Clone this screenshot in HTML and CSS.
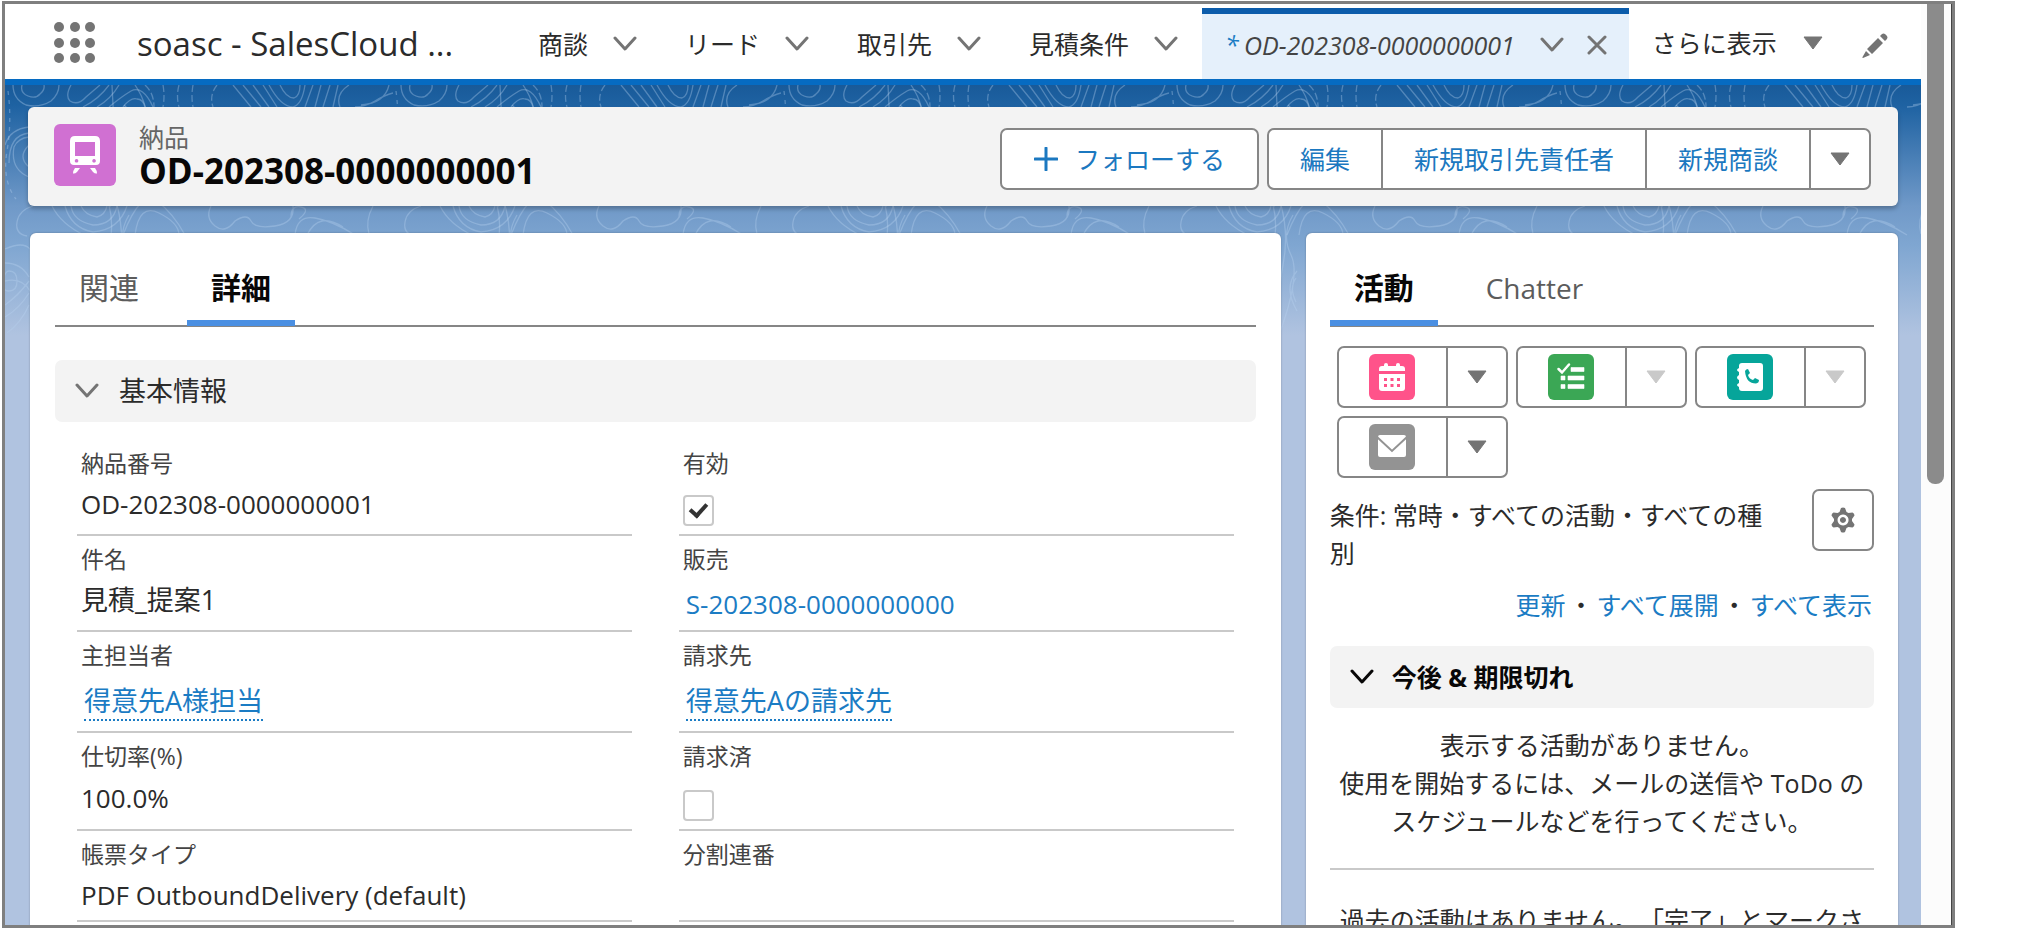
FILE: index.html
```html
<!DOCTYPE html>
<html lang="ja">
<head>
<meta charset="utf-8">
<title>OD-202308-0000000001 | soasc</title>
<link rel="stylesheet" href="styles.css">
</head>
<body>
<svg class="defs" width="0" height="0" aria-hidden="true">
  <symbol id="chev" viewBox="0 0 24 16"><path d="M2 2l10 11L22 2" fill="none" stroke="currentColor" stroke-width="3" stroke-linecap="round" stroke-linejoin="round"/></symbol>
  <symbol id="tri" viewBox="0 0 20 14"><path d="M1 1h18L10 13z" fill="currentColor" stroke="currentColor" stroke-linejoin="round"/></symbol>
</svg>
<div class="frame">
  <div class="page">
    <header class="nav">
      <button class="launcher" aria-label="アプリケーションランチャー">
        <svg width="42" height="42" viewBox="0 0 42 42" fill="#747474"><circle cx="5" cy="5" r="5"/><circle cx="21" cy="5" r="5"/><circle cx="36" cy="5" r="5"/><circle cx="5" cy="21" r="5"/><circle cx="21" cy="21" r="5"/><circle cx="36" cy="21" r="5"/><circle cx="5" cy="36" r="5"/><circle cx="21" cy="36" r="5"/><circle cx="36" cy="36" r="5"/></svg>
      </button>
      <span class="app">soasc - SalesCloud ...</span>
      <nav class="items">
        <a class="item" href="#">商談<svg class="chev"><use href="#chev"/></svg></a>
        <a class="item" href="#">リード<svg class="chev"><use href="#chev"/></svg></a>
        <a class="item" href="#">取引先<svg class="chev"><use href="#chev"/></svg></a>
        <a class="item" href="#">見積条件<svg class="chev"><use href="#chev"/></svg></a>
        <div class="item current">
          <span class="star">*</span><a class="tabname" href="#">OD-202308-0000000001</a>
          <button class="plain" aria-label="メニュー"><svg class="chev"><use href="#chev"/></svg></button>
          <button class="plain close" aria-label="閉じる"><svg width="22" height="20" viewBox="0 0 22 20"><path d="M3 2l16 16M19 2L3 18" stroke="#747474" stroke-width="3" stroke-linecap="round"/></svg></button>
        </div>
      </nav>
      <button class="plain more">さらに表示<svg class="tri"><use href="#tri"/></svg></button>
      <button class="plain edit" aria-label="ナビゲーション項目を編集"><svg width="26" height="26" viewBox="0 0 26 26" fill="#747474"><path d="M5 16L16 5l5 5L10 21zM18 3l2-2q1.500-1 3 0l2 2q1 1.500 0 3l-2 2zM4 18l4 4-7 3q-1 0-.5-1z"/></svg></button>
    </header>
    <main class="content">
      <svg class="contours" aria-hidden="true">
        <defs>
          <linearGradient id="fade" x1="0" y1="0" x2="0" y2="1"><stop offset="0" stop-color="#fff"/><stop offset=".8" stop-color="#fff"/><stop offset="1" stop-color="#000"/></linearGradient>
          <mask id="m"><rect width="100%" height="290" fill="url(#fade)"/></mask>
          <pattern id="topo" width="388" height="300" patternUnits="userSpaceOnUse">
            <g fill="none" stroke="#b9d3f0" stroke-opacity=".35" stroke-width="1.300">
              <path d="M17 0q-2 8 6 11t12-2q5-4 4-9M8 0q0 14 13 20 14 3 25-4 8-7 8-16"/>
              <path d="M66 0q-6 11-1 16 8 5 16-4L95 0M78 22Q94 14 104 0M92 22q14-8 22-22M104 22q12-10 22-16 12-6 22 16M118 22q8-10 14-8 6 0 8 8"/>
              <path d="M140 0q9 8 9 22M158 0q2 11 0 22M174 0q-3 11 0 22M188 0q-2 11 0 22M212 0q-8 10-4 22" stroke-dasharray="7 3"/>
              <path d="M228 0l18 22M238 0l18 22M248 0l16 22M258 0l14 22M264 0q12 22 24 22 9-2 12-22M275 0q6 13 14 13 6-2 6-13M308 0l-8 22M316 0l-6 22M325 0l-7 22M333 0l-5 22M344 0q-14 9-9 22"/>
              <path d="M384 0q-4 18-28 20M350 22q10 0 20-6t18-8"/>
              <path d="M0 60q5-16 24-18M4 78Q4 50 24 48M24 92Q5 84 9 62q4-9 15-10M24 82q-12-10 0-22"/>
              <path d="M3 6q4 30-1 60t9 48" stroke-dasharray="4 5"/>
              <path d="M28 121q-14 4-16 16t10 14M47 121q9 18 32 29M66 121q2 15 22 19 20 0 24-19M76 121q4 9 16 11 8-2 10-11M60 121q6 22 28 26 26-2 34-26"/>
              <path d="M118 150q18-46 34-34t28 34M130 150q4-32 24-22t20 22M206 121q-6 12 4 20t20-5q12-8 16 0t24 5 18-20M290 150q2-20 20-17t40 17M286 132q0-12 10-10t-2 12M302 150q12-24 36-8M368 121q-8 15-4 28"/>
              <path d="M0 164q18-8 25 0v42q-8-14-25-10M0 178q16 0 24 14M4 186q8 0 8 10t-8 10-6-10 6-10M0 220q14-10 24-24M0 232q14-8 24-24M2 248q14-10 22-28"/>
              <path d="M107 0q4 60-2 122M119 20q18 14 4 50t-4 51M130 0q14 20 14 50t-12 70M104 120q8 30-8 70t6 90M112 120q8 30 2 60t-6 90M124 130q-12 20-2 40t-12 80M128 186q-14 16 0 40M127 193q-7 10 0 24"/>
            </g>
          </pattern>
        </defs>
        <rect width="100%" height="290" fill="url(#topo)" mask="url(#m)"/>
      </svg>
      <section class="record">
        <svg class="record-icon" width="62" height="62" viewBox="0 0 62 62"><rect width="62" height="62" rx="6" fill="#d070d2"/><path fill="#fff" fill-rule="evenodd" d="M21 12h20q5 0 5 5v20q0 4-4 4H20q-4 0-4-4V17q0-5 5-5zM21 18v14h20V18zM22.500 35a1.800 1.800 0 1 0 .1 0zM40 35a1.800 1.800 0 1 0 .1 0zM21 44h5l-3 4q-2 2-4 1.500 0-3 2-5.500zM36 44h5q2 2.500 2 5.500-2 .5-4-1.500z"/></svg>
        <div class="titles">
          <div class="kind">納品</div>
          <h1>OD-202308-0000000001</h1>
        </div>
        <div class="actions">
          <button class="btn follow"><svg width="24" height="24" viewBox="0 0 24 24"><path d="M12 1v22M1 12h22" stroke="currentColor" stroke-width="3" stroke-linecap="round"/></svg>フォローする</button>
          <div class="group">
            <button class="btn">編集</button><button class="btn">新規取引先責任者</button><button class="btn">新規商談</button><button class="btn drop" aria-label="その他のアクション"><svg class="tri"><use href="#tri"/></svg></button>
          </div>
        </div>
      </section>
      <div class="columns">
        <section class="panel">
          <div class="tabs"><a href="#">関連</a><a class="on" href="#">詳細</a></div>
          <button class="section"><svg class="chev"><use href="#chev"/></svg>基本情報</button>
          <div class="fields">
            <div class="field"><div class="label">納品番号</div><div class="value">OD-202308-0000000001</div></div>
            <div class="field"><label class="label" for="active">有効</label><div class="value"><input id="active" type="checkbox" checked></div></div>
            <div class="field"><div class="label">件名</div><div class="value ja">見積_提案1</div></div>
            <div class="field"><div class="label">販売</div><div class="value link"><a href="#">S-202308-0000000000</a></div></div>
            <div class="field"><div class="label">主担当者</div><div class="value ja link lookup"><a href="#">得意先A様担当</a></div></div>
            <div class="field"><div class="label">請求先</div><div class="value ja link lookup"><a href="#">得意先Aの請求先</a></div></div>
            <div class="field roomy"><div class="label">仕切率(%)</div><div class="value">100.0%</div></div>
            <div class="field roomy"><label class="label" for="billed">請求済</label><div class="value"><input id="billed" type="checkbox"></div></div>
            <div class="field last"><div class="label">帳票タイプ</div><div class="value">PDF OutboundDelivery (default)</div></div>
            <div class="field last"><div class="label">分割連番</div><div class="value"></div></div>
          </div>
        </section>
        <aside class="panel side">
          <div class="tabs"><a class="on" href="#">活動</a><a class="latin" href="#">Chatter</a></div>
          <div class="activities">
            <div class="group">
              <button class="btn act" aria-label="新規行動"><svg width="46" height="46" viewBox="0 0 46 46"><rect width="46" height="46" rx="6" fill="#ff538a"/><g fill="#fff"><path d="M13 12h20q3 0 3 3v2H10v-2q0-3 3-3z"/><rect x="15" y="9" width="4" height="6" rx="2"/><rect x="27" y="9" width="4" height="6" rx="2"/><path d="M10 20h26v14q0 3-3 3H13q-3 0-3-3z"/></g><path d="M15 24h3v3h-3zm6.500 0h3v3h-3zm6.500 0h3v3h-3zM15 30h3v3h-3zm6.500 0h3v3h-3zm6.500 0h3v3h-3z" fill="#ff538a"/></svg></button><button class="btn drop" aria-label="行動メニュー"><svg class="tri"><use href="#tri"/></svg></button>
            </div>
            <div class="group">
              <button class="btn act" aria-label="新規 ToDo"><svg width="46" height="46" viewBox="0 0 46 46"><rect width="46" height="46" rx="6" fill="#3ba755"/><path d="M10.500 15l3.500 3.500 7-8" fill="none" stroke="#fff" stroke-width="2.500" stroke-linecap="round"/><path d="M23 13.500h13v4H23zM20 22h16v4H20zM20 30.500h16v4H20zM13 22h4v4h-4zM13 30.500h4v4h-4z" fill="#fff" stroke="#fff" stroke-width=".6" stroke-linejoin="round"/></svg></button><button class="btn drop" disabled aria-label="ToDo メニュー"><svg class="tri"><use href="#tri"/></svg></button>
            </div>
            <div class="group">
              <button class="btn act" aria-label="活動の記録"><svg width="46" height="46" viewBox="0 0 46 46"><rect width="46" height="46" rx="6" fill="#06a59a"/><path d="M15 9h18q3 0 3 3v22q0 3-3 3H15q-3 0-3-3v-1q-2-1-2-2t2-2v-3q-2-1-2-2.500t2-2.500v-3q-2-1-2-2t2-2v-2q0-3 3-3z" fill="#fff"/><path d="M18 17q1-2 3-2l2 4-2 2q1 4 5 5l2-2 4 2q0 3-3 3.500-10 0-11-12.500z" fill="#06a59a"/></svg></button><button class="btn drop" disabled aria-label="活動メニュー"><svg class="tri"><use href="#tri"/></svg></button>
            </div>
            <div class="group">
              <button class="btn act" aria-label="メール"><svg width="46" height="46" viewBox="0 0 46 46"><rect width="46" height="46" rx="6" fill="#939393"/><rect x="9" y="11" width="28" height="22" rx="2" fill="#fff"/><path d="M8 13l15 14 15-14" fill="none" stroke="#939393" stroke-width="2"/></svg></button><button class="btn drop" aria-label="メールメニュー"><svg class="tri"><use href="#tri"/></svg></button>
            </div>
          </div>
          <div class="filter">
            <p>条件: 常時・すべての活動・すべての種別</p>
            <button class="btn gear" aria-label="設定"><svg width="26" height="26" viewBox="0 0 26 26"><path fill="#747474" fill-rule="evenodd" d="M11 1q2-1 4 0l1.500 4 2 1 4-.5q2 1 2 3L22 12v2l2.500 3.500q0 2-2 3l-4-.5-2 1L15 25q-2 1-4 0l-1.500-4-2-1-4 .5q-2-1-2-3L4 14v-2L1.500 8.500q0-2 2-3l4 .5 2-1zM13 7.500a5.500 5.500 0 1 0 .1 0zM13 10a3 3 0 1 1-.1 0z"/></svg></button>
          </div>
          <div class="links"><a href="#">更新</a>・<a href="#">すべて展開</a>・<a href="#">すべて表示</a></div>
          <button class="section dark"><svg class="chev"><use href="#chev"/></svg>今後 &amp; 期限切れ</button>
          <p class="empty">表示する活動がありません。<br>使用を開始するには、メールの送信や ToDo のスケジュールなどを行ってください。</p>
          <p class="past">過去の活動はありません。「完了」とマークさ</p>
        </aside>
      </div>
    </main>
  </div>
  <div class="scroll"><div class="thumb"></div></div>
</div>
</body>
</html>
```
FILE: styles.css
```css
* { box-sizing: border-box; }
body {
  margin: 0;
  background: #fff;
  color: #2b2b2b;
  font: 25px/38px "Open Sans", "Noto Sans CJK JP", sans-serif;
  text-spacing-trim: space-all;
}
button { font: inherit; color: inherit; cursor: pointer; }
a { color: #1b7cc4; text-decoration: none; }
p, h1 { margin: 0; }
svg { display: block; flex: none; }
.defs { position: absolute; }
.frame {
  display: flex;
  height: calc(100vh - 7px);
  margin: 1px 72px 6px 2px;
  border: 3px solid #7f7f7f;
  overflow: hidden;
}
.page { flex: 1; min-width: 0; display: flex; flex-direction: column; }
.scroll { width: 31px; padding-left: 6px; background: #fcfcfc; border-right: 1px solid #444; }
.thumb { width: 17px; height: 480px; background: #8b8b8b; border-radius: 0 0 8px 8px; }

.chev { width: 24px; height: 16px; color: #747474; }
.tri { width: 20px; height: 14px; color: #747474; }
.plain { padding: 0; border: 0; background: none; }

.nav {
  flex: none;
  display: flex;
  align-items: center;
  height: 81px;
  border-bottom: 6px solid #066bc2;
}
.launcher { margin-left: 49px; padding: 2px 0 0; border: 0; background: none; }
.app { flex: none; width: 418px; padding: 4px 0 0 41px; font-size: 33px; white-space: nowrap; }
.items { display: flex; align-self: stretch; }
.item { display: flex; align-items: center; gap: 25px; padding: 4px 24px 0; color: #2b2b2b; white-space: nowrap; }
.item.current {
  gap: 0;
  margin-top: 4px;
  padding: 0 21px 4px 23px;
  border-top: 6px solid #0b5cab;
  background: #e5f0fb;
}
.star { width: 19px; color: #1b7cc4; font-style: italic; }
.tabname { color: #444; font-style: italic; margin-right: 25px; }
.close { margin-left: 22px; }
.more { display: flex; align-items: center; gap: 26px; margin-left: 23px; padding-top: 2px; white-space: nowrap; }
.edit { margin-left: auto; margin-right: 33px; padding-top: 8px; }

.content {
  position: relative;
  flex: 1;
  min-height: 0;
  padding: 22px 23px 0;
  background: linear-gradient(#195a99 0, #1e62a2 20px, #7099c8 121px, #7fa6d1 160px, #b0c3e0 250px, #b0c3e0 100%);
  overflow: hidden;
}
.contours { position: absolute; inset: 0; width: 100%; height: 290px; }

.record, .columns { position: relative; }
.record {
  display: flex;
  align-items: center;
  height: 99px;
  padding: 0 27px 0 26px;
  background: #f3f3f3;
  border-radius: 6px;
  box-shadow: 0 3px 4px rgba(0, 0, 0, .25);
}
.record-icon { margin-bottom: 3px; }
.titles { flex: 1; padding-left: 23px; }
.kind { color: #666; line-height: 28px; }
h1 { color: #080707; font-size: 35px; line-height: 40px; font-weight: 700; white-space: nowrap; }
.actions, .group { display: flex; }
.actions { gap: 8px; padding-top: 4px; }
.btn {
  height: 62px;
  padding: 0 32px;
  border: 2px solid #868686;
  border-radius: 7px;
  background: #fff;
  color: #1b78c0;
  white-space: nowrap;
  display: flex;
  align-items: center;
  justify-content: center;
}
.follow { gap: 17px; }
.group .btn { padding: 0 31px; border-radius: 0; margin-left: -2px; }
.group .btn:first-child { margin-left: 0; border-radius: 7px 0 0 7px; }
.group .btn:last-child { border-radius: 0 7px 7px 0; }
.group .drop { width: 62px; padding: 0; }
.drop:disabled .tri { color: #c9c9c9; }

.columns { display: grid; grid-template-columns: minmax(0, 1250fr) minmax(0, 592fr); gap: 25px; padding: 27px 0 0 2px; }
.panel { min-height: 900px; padding: 22px 25px 0; background: #fff; border-radius: 6px; box-shadow: 0 0 2px rgba(0, 0, 0, .3); }
.side { padding: 22px 24px 0; }
.tabs { display: flex; gap: 24px; height: 72px; border-bottom: 2px solid #868686; font-size: 30px; }
.tabs a { height: 71px; padding: 0 24px; line-height: 66px; color: #5c5c5c; border-bottom: 6px solid transparent; }
.tabs .on { color: #080707; font-weight: 700; border-bottom-color: #4a8fe2; }
.tabs .latin { font-size: 28px; }
.section {
  display: flex;
  align-items: center;
  gap: 20px;
  width: 100%;
  height: 62px;
  margin-top: 33px;
  padding: 0 20px;
  border: 0;
  border-radius: 7px;
  background: #f3f3f3;
  font-size: 27px;
}
.dark { margin-top: 22px; gap: 18px; color: #080707; font-size: 25px; font-weight: 700; }
.dark .chev { color: #080707; }

.fields { display: grid; grid-template-columns: 1fr 1fr; gap: 0 47px; padding: 18px 22px 0; }
.field { padding: 7px 4px 0; border-bottom: 2px solid #c9c9c9; }
.label { display: block; font-size: 23px; line-height: 32px; color: #444; }
.value { min-height: 55px; font-size: 26px; line-height: 50px; }
.value.ja { font-size: 27px; }
.value.link { padding-left: 3px; height: 55px; line-height: 58px; }
.value.lookup { height: 60px; line-height: 60px; }
.lookup a { border-bottom: 2px dotted #1b7cc4; }
.roomy .value { min-height: 57px; line-height: 52px; }
.last .value { min-height: 47px; }
input[type="checkbox"] {
  appearance: none;
  display: grid;
  place-items: center;
  width: 31px;
  height: 31px;
  margin: 0;
  border: 2px solid #c9c9c9;
  border-radius: 4px;
  background: #fff;
}
.value:has(input) { padding-top: 16px; }
.roomy .value:has(input) { padding-top: 18px; }
input:checked::after {
  content: "";
  width: 7px;
  height: 13px;
  border: solid #333;
  border-width: 0 4px 4px 0;
  rotate: 42deg;
  translate: 0 -2px;
}

.activities { display: flex; flex-wrap: wrap; gap: 8px; padding: 19px 0 0 7px; }
.group .act { width: 111px; padding: 0; }
.filter { display: flex; justify-content: space-between; gap: 36px; padding-top: 11px; }
.filter p { flex: 1; padding-top: 7px; }
.gear { width: 62px; padding: 0; }
.links { display: flex; justify-content: flex-end; gap: 3px; padding: 14px 2px 0 0; }
.empty { padding: 18px 5px 28px; border-bottom: 2px solid #c9c9c9; text-align: center; }
.past { padding-top: 31px; text-align: center; }
```
